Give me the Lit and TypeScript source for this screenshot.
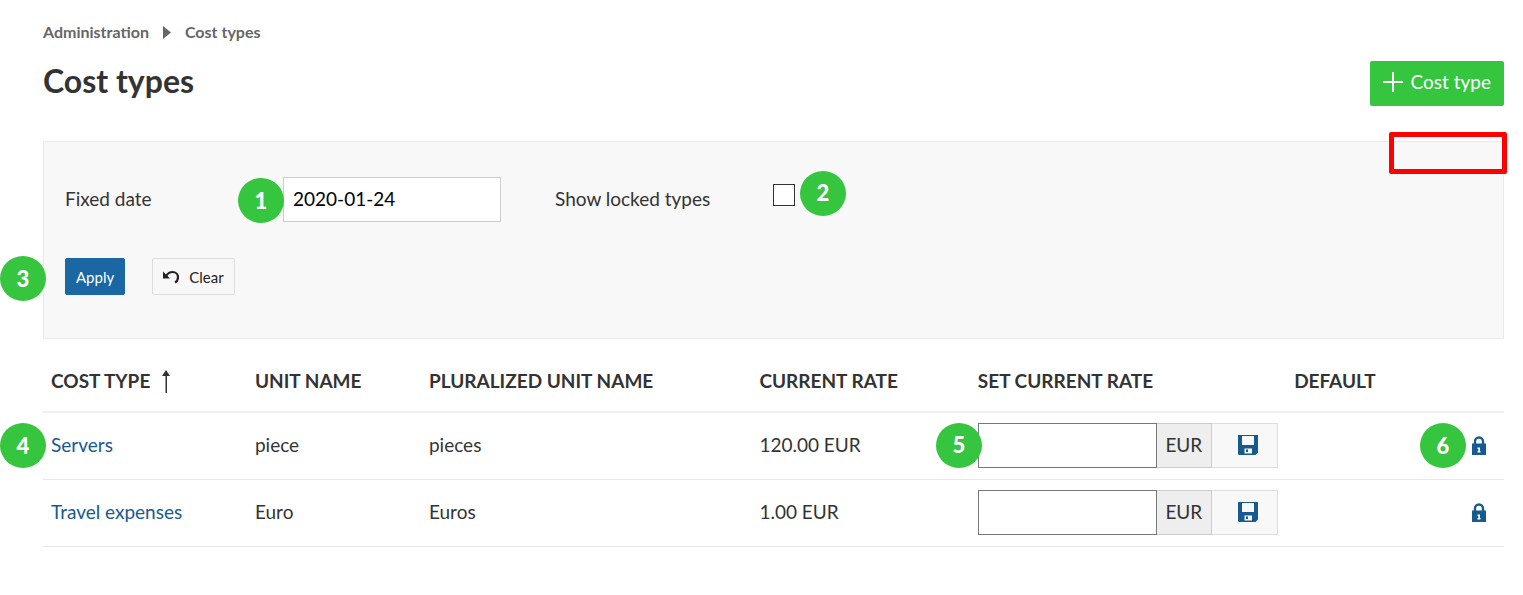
import { LitElement, html, css, svg } from "lit";
import { customElement, state } from "lit/decorators.js";

interface CostType {
  id: string;
  name: string;
  unit: string;
  plural: string;
  rate: string;
  markers?: { name: string; rate: string; lock: string };
}

const floppyIcon = svg`<svg class="floppy" viewBox="0 0 20 20" aria-hidden="true">
  <path fill-rule="evenodd" d="M0 0H20V17.500L17.500 20H1L0 19ZM4 1V10H16V1ZM6.500 13.500V18.500H14V13.500ZM8 14.500H10V17H8Z"/>
</svg>`;

const lockIcon = svg`<svg class="lock" viewBox="0 0 14 19" aria-hidden="true">
  <path d="M3 8.500V5.500a4 4 0 0 1 8 0V8.500" fill="none" stroke="currentColor" stroke-width="2.400"/>
  <path fill-rule="evenodd" d="M0 7.500H14V19H0ZM5.500 11.500V13H6.300V15H5.500V16.500H8.500V15H8V11.500Z"/>
</svg>`;

@customElement("step-marker")
export class StepMarker extends LitElement {
  static styles = css`
    :host {
      display: flex;
      align-items: center;
      justify-content: center;
      box-sizing: border-box;
      width: 46px;
      height: 45px;
      border-radius: 50%;
      background: #35c53f;
      color: #fff;
      font: 900 22px/24px Lato, sans-serif;
    }
  `;
  render() {
    return html`<slot></slot>`;
  }
}

@customElement("app-root")
export class AppRoot extends LitElement {
  static styles = css`
    :host {
      display: block;
      box-sizing: border-box;
      padding: 21px 19px 48px 43px;
      background: #fff;
      color: #333;
      font: 400 19px/28px Lato, sans-serif;
    }
    * {
      box-sizing: border-box;
    }
    input,
    button {
      font: inherit;
      margin: 0;
    }
    svg {
      display: block;
      fill: currentColor;
    }
    .breadcrumb {
      display: flex;
      align-items: center;
      gap: 14px;
      font-size: 16px;
      line-height: 22px;
      font-weight: 700;
      color: #666;
    }
    .breadcrumb a {
      color: inherit;
      text-decoration: none;
    }
    .chevron {
      width: 8px;
      height: 13px;
    }
    .toolbar {
      display: flex;
      justify-content: space-between;
      align-items: flex-start;
      margin-top: 18px;
    }
    h1 {
      margin: 0;
      font-size: 32px;
      line-height: 40px;
      font-weight: 700;
    }
    .create {
      display: flex;
      align-items: center;
      gap: 8px;
      height: 45px;
      padding: 0 13px 4px;
      border: 0;
      border-radius: 2px;
      background: #35c53f;
      color: #fff;
    }
    .plus {
      width: 20px;
      height: 20px;
    }
    .filters {
      position: relative;
      margin-top: 35px;
      padding: 35px 21px 43px;
      border: 1px solid #eaeaea;
      background: #f8f8f8;
    }
    .fields {
      display: grid;
      grid-template-columns: 218px 272px 218px auto;
      justify-content: start;
      align-items: center;
    }
    .label {
      padding-bottom: 2px;
    }
    .date {
      display: block;
      width: 218px;
      height: 45px;
      padding: 0 9px 2px;
      border: 1px solid #ccc;
      border-radius: 0;
      background: #fff;
      color: #000;
    }
    .field {
      position: relative;
    }
    .check {
      appearance: none;
      display: block;
      width: 22px;
      height: 22px;
      margin-bottom: 10px;
      border: 1px solid #333;
      background: #fff;
    }
    .actions {
      position: relative;
      display: flex;
      gap: 27px;
      margin-top: 36px;
    }
    .action {
      display: flex;
      align-items: center;
      gap: 10px;
      height: 37px;
      padding: 0 10px;
      border: 1px solid #ddd;
      border-radius: 2px;
      background: #f8f8f8;
      color: #222;
      font-size: 15px;
    }
    .primary {
      border-color: #1a67a3;
      background: #1a67a3;
      color: #fff;
    }
    .undo {
      width: 16px;
      height: 14px;
    }
    .highlight {
      position: absolute;
      top: -10px;
      right: -4px;
      width: 118px;
      height: 42px;
      border: 5px solid #f00;
      border-radius: 2px;
    }
    .marker {
      position: absolute;
    }
    .mark-date {
      left: -45px;
      top: 1px;
    }
    .mark-check {
      left: 27px;
      top: -13px;
    }
    .mark-apply {
      left: -65px;
      top: -2px;
    }
    .mark-name {
      left: -43px;
      top: 10px;
    }
    .mark-rate {
      left: -42px;
      top: 0;
    }
    .mark-lock {
      right: 38px;
      top: 10px;
    }
    table {
      width: 100%;
      border-collapse: separate;
      border-spacing: 0;
      table-layout: fixed;
    }
    .c-name {
      width: 13.960%;
    }
    .c-unit {
      width: 11.910%;
    }
    .c-plural {
      width: 22.620%;
    }
    .c-current {
      width: 14.950%;
    }
    .c-set {
      width: 21.650%;
    }
    th {
      height: 74px;
      padding: 12px 8px 0;
      border-bottom: 2px solid #f0f0f0;
      text-align: left;
      font-weight: 700;
      text-transform: uppercase;
      white-space: nowrap;
    }
    td {
      position: relative;
      height: 67px;
      padding: 0 8px 2px;
      border-bottom: 1px solid #e7e7e7;
    }
    .sort {
      display: flex;
      align-items: center;
      gap: 12px;
    }
    .arrow {
      width: 8px;
      height: 23px;
    }
    .link {
      color: #175a8e;
      text-decoration: none;
    }
    .rate {
      position: relative;
      display: flex;
      width: 300px;
      height: 45px;
    }
    .amount {
      flex: 1;
      min-width: 0;
      padding: 0 9px;
      border: 1px solid #777;
      border-radius: 0;
      background: #fff;
    }
    .currency {
      display: flex;
      align-items: center;
      justify-content: center;
      width: 55px;
      border: 1px solid #ccc;
      border-left: 0;
      background: #eee;
    }
    .save {
      display: flex;
      align-items: center;
      justify-content: center;
      width: 66px;
      padding: 0 0 0 8px;
      border: 1px solid #ddd;
      border-left: 0;
      background: #f8f8f8;
      color: #175a8e;
    }
    .floppy {
      width: 20px;
      height: 20px;
    }
    .lock-button {
      display: block;
      margin-left: auto;
      margin-right: 10px;
      padding: 0;
      border: 0;
      background: none;
      color: #175a8e;
    }
    .lock {
      width: 14px;
      height: 19px;
    }
  `;

  @state() private costTypes: CostType[] = [
    {
      id: "servers",
      name: "Servers",
      unit: "piece",
      plural: "pieces",
      rate: "120.00 EUR",
      markers: { name: "4", rate: "5", lock: "6" },
    },
    { id: "travel", name: "Travel expenses", unit: "Euro", plural: "Euros", rate: "1.00 EUR" },
  ];

  private renderRow(c: CostType) {
    const m = c.markers;
    return html`<tr>
      <td>
        <a class="link" href="#${c.id}">${c.name}</a>
        ${m ? html`<step-marker class="marker mark-name">${m.name}</step-marker>` : ""}
      </td>
      <td>${c.unit}</td>
      <td>${c.plural}</td>
      <td>${c.rate}</td>
      <td>
        <div class="rate">
          <input class="amount" id="rate-${c.id}" type="text" aria-label="Set current rate for ${c.name}" />
          <label class="currency" for="rate-${c.id}">EUR</label>
          <button class="save" type="button" aria-label="Save rate">${floppyIcon}</button>
          ${m ? html`<step-marker class="marker mark-rate">${m.rate}</step-marker>` : ""}
        </div>
      </td>
      <td>
        <button class="lock-button" type="button" aria-label="Lock ${c.name}">${lockIcon}</button>
        ${m ? html`<step-marker class="marker mark-lock">${m.lock}</step-marker>` : ""}
      </td>
    </tr>`;
  }

  render() {
    return html`
      <nav class="breadcrumb" aria-label="Breadcrumb">
        <a href="#administration">Administration</a>
        <svg class="chevron" viewBox="0 0 8 13" aria-hidden="true"><path d="M0 0L8 6.500L0 13Z" /></svg>
        <a href="#cost-types">Cost types</a>
      </nav>
      <header class="toolbar">
        <h1>Cost types</h1>
        <button class="create" type="button">
          <svg class="plus" viewBox="0 0 20 20" aria-hidden="true"><path d="M9 0H11V9H20V11H11V20H9V11H0V9H9Z" /></svg>
          Cost type
        </button>
      </header>
      <form class="filters" @submit=${(e: Event) => e.preventDefault()}>
        <div class="fields">
          <label class="label" for="fixed-date">Fixed date</label>
          <div class="field">
            <input class="date" id="fixed-date" type="text" value="2020-01-24" />
            <step-marker class="marker mark-date">1</step-marker>
          </div>
          <label class="label" for="locked">Show locked types</label>
          <div class="field">
            <input class="check" id="locked" type="checkbox" />
            <step-marker class="marker mark-check">2</step-marker>
          </div>
        </div>
        <div class="actions">
          <button class="action primary" type="submit">Apply</button>
          <button class="action" type="reset">
            <svg class="undo" viewBox="0 0 16 14" aria-hidden="true">
              <path d="M0 1.500V8.500H7L4.800 6.300L2.500 4Z" />
              <path d="M3.200 5.800C5 3 7.200 2 9.500 2C12.500 2 15 4.200 15 7.300C15 9.800 13.800 11.500 12 12.500" fill="none" stroke="currentColor" stroke-width="2.200" />
            </svg>
            Clear
          </button>
          <step-marker class="marker mark-apply">3</step-marker>
        </div>
        <div class="highlight"></div>
      </form>
      <table>
        <colgroup>
          <col class="c-name" /><col class="c-unit" /><col class="c-plural" />
          <col class="c-current" /><col class="c-set" /><col />
        </colgroup>
        <thead>
          <tr>
            <th>
              <div class="sort">
                Cost type
                <svg class="arrow" viewBox="0 0 8 23" aria-hidden="true"><path d="M4 0L8 6H5V23H3.500V6H0Z" /></svg>
              </div>
            </th>
            <th>Unit name</th>
            <th>Pluralized unit name</th>
            <th>Current rate</th>
            <th>Set current rate</th>
            <th>Default</th>
          </tr>
        </thead>
        <tbody>
          ${this.costTypes.map((c) => this.renderRow(c))}
        </tbody>
      </table>
    `;
  }
}
